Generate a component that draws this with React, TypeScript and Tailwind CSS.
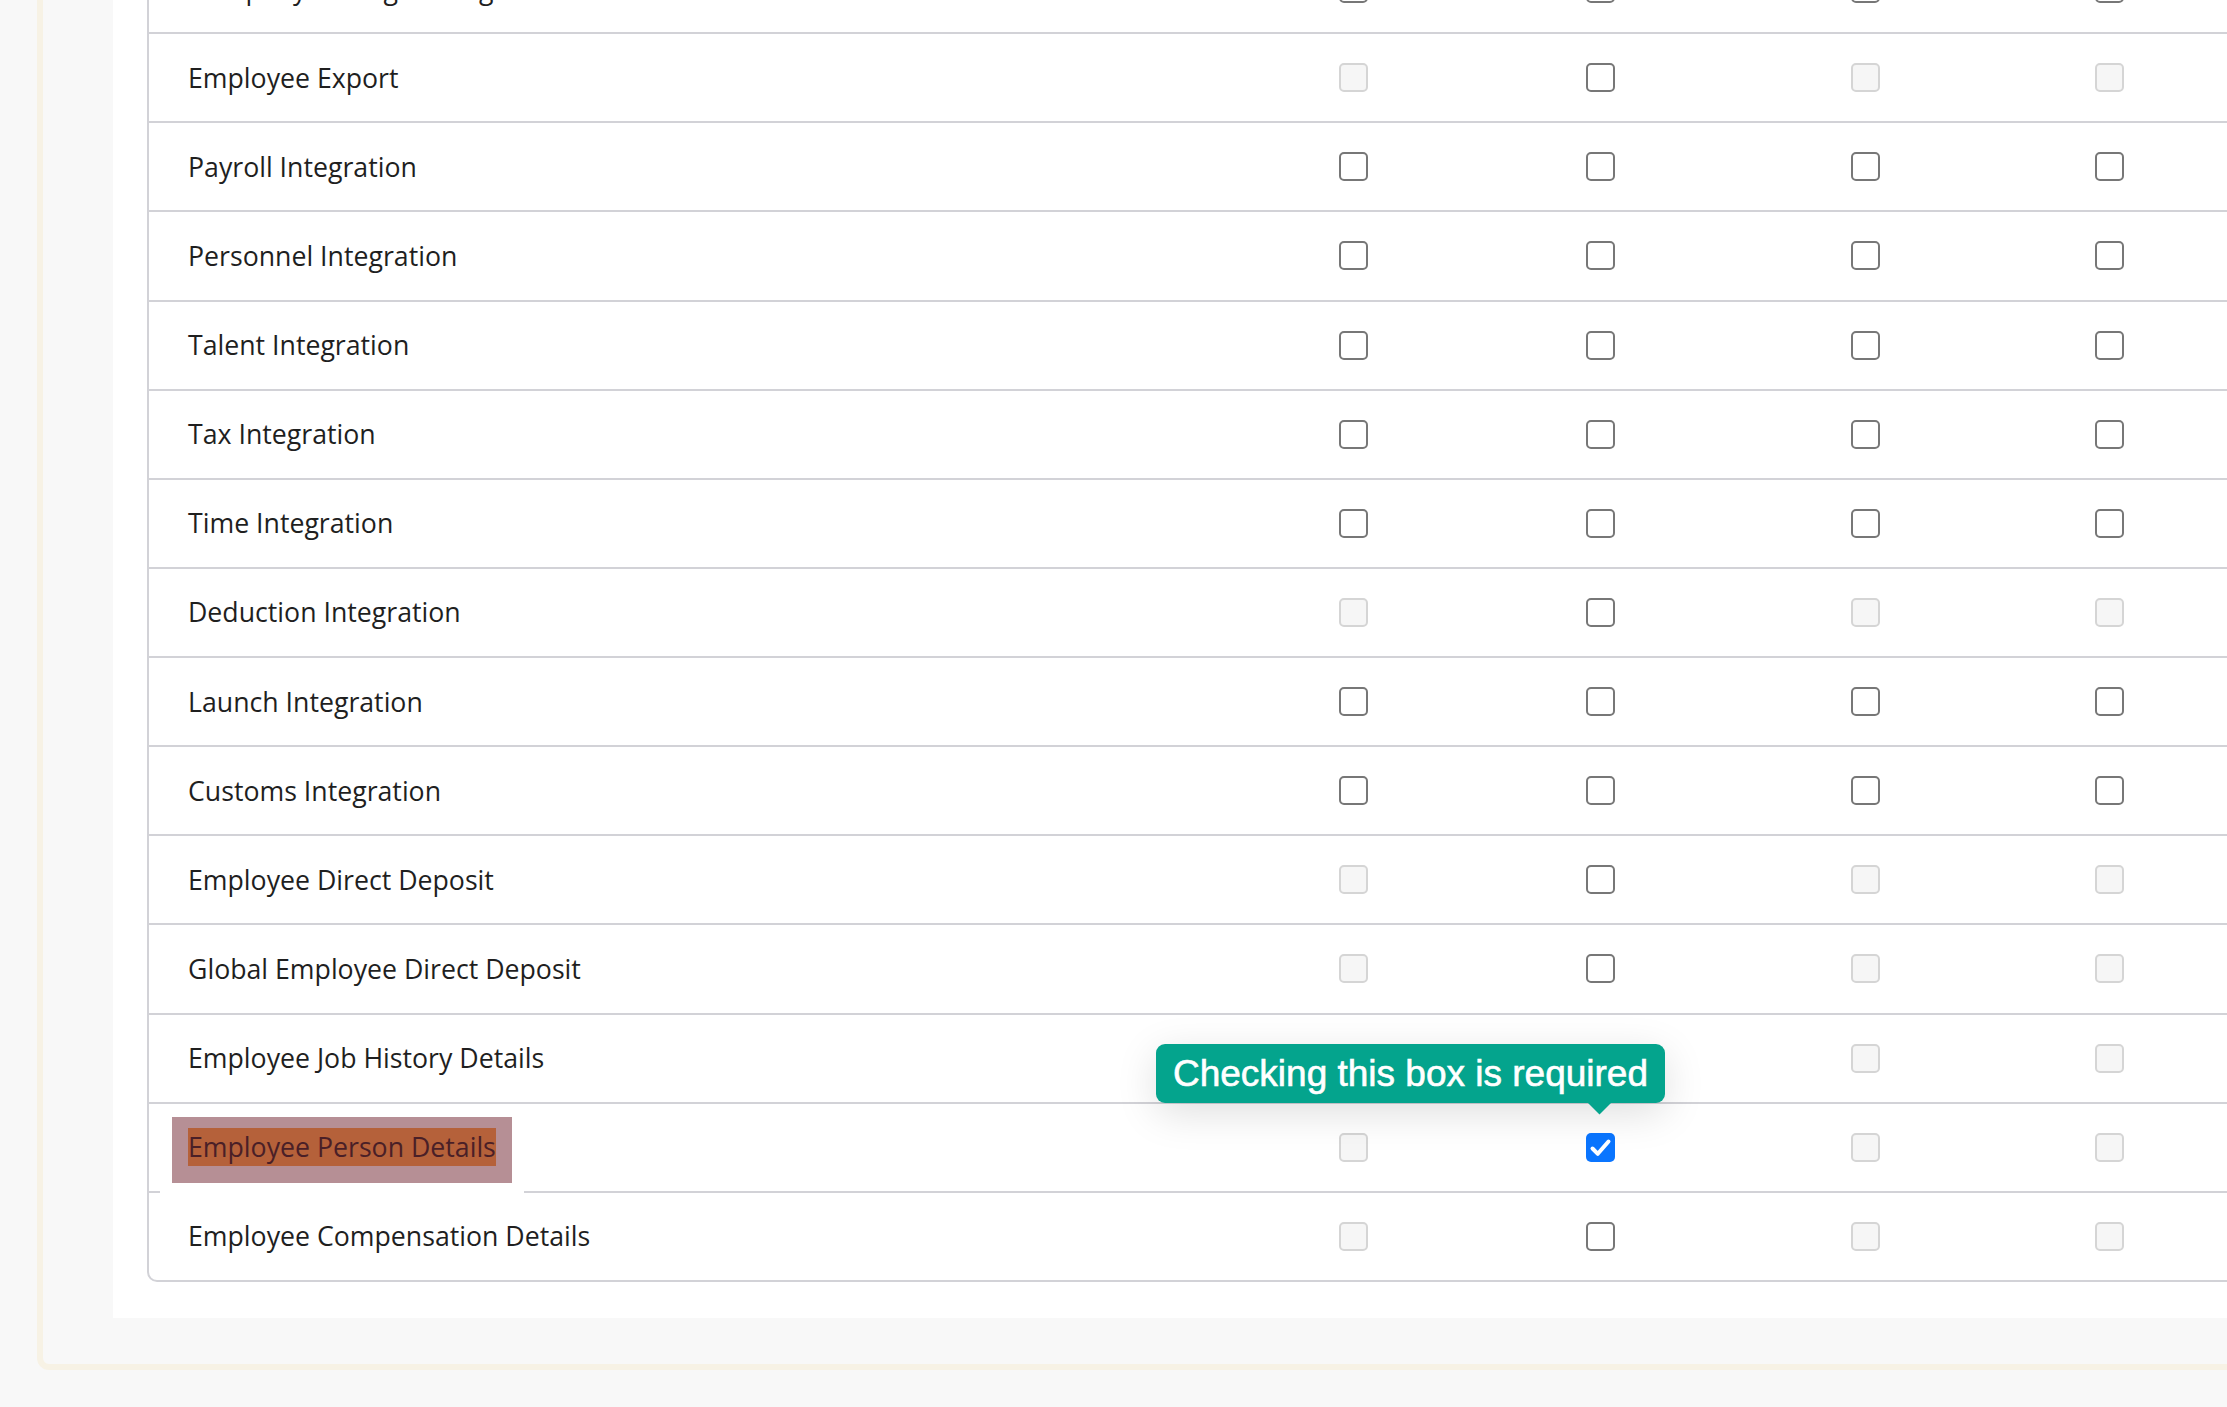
import React from "react";

type Box = "on" | "off" | "checked";

interface PermissionRow {
  label: string;
  boxes: Box[];
  highlight?: boolean;
}

const rows: PermissionRow[] = [
  { label: "Company Manager Integration", boxes: ["on", "on", "on", "on"] },
  { label: "Employee Export", boxes: ["off", "on", "off", "off"] },
  { label: "Payroll Integration", boxes: ["on", "on", "on", "on"] },
  { label: "Personnel Integration", boxes: ["on", "on", "on", "on"] },
  { label: "Talent Integration", boxes: ["on", "on", "on", "on"] },
  { label: "Tax Integration", boxes: ["on", "on", "on", "on"] },
  { label: "Time Integration", boxes: ["on", "on", "on", "on"] },
  { label: "Deduction Integration", boxes: ["off", "on", "off", "off"] },
  { label: "Launch Integration", boxes: ["on", "on", "on", "on"] },
  { label: "Customs Integration", boxes: ["on", "on", "on", "on"] },
  { label: "Employee Direct Deposit", boxes: ["off", "on", "off", "off"] },
  { label: "Global Employee Direct Deposit", boxes: ["off", "on", "off", "off"] },
  { label: "Employee Job History Details", boxes: ["off", "on", "off", "off"] },
  { label: "Employee Person Details", boxes: ["off", "checked", "off", "off"], highlight: true },
  { label: "Employee Compensation Details", boxes: ["off", "on", "off", "off"] },
];

function Checkbox({ state, tooltip }: { state: Box; tooltip?: boolean }) {
  return (
    <div className="relative h-[29px] w-[29px]">
      {state === "checked" && (
        <span className="flex h-full w-full items-center justify-center rounded-[5px] bg-[#0a75ff]">
          <svg width="29" height="29" viewBox="0 0 29 29" fill="none">
            <path d="M6.5 15.5 L11.8 20.8 L22.5 8.5" stroke="#fff" strokeWidth="4" strokeLinecap="round" strokeLinejoin="round" />
          </svg>
        </span>
      )}
      {state === "off" && <span className="block h-full w-full rounded-[5px] border-2 border-[#d5d5d5] bg-[#f6f6f6]" />}
      {state === "on" && <span className="block h-full w-full rounded-[5px] border-2 border-[#777777] bg-white" />}

      {tooltip && (
        <div className="absolute left-[-429.5px] top-[-89px] z-20 flex h-[59px] w-[509px] items-center justify-center rounded-[9px] bg-[#04a48d] shadow-[0_10px_40px_rgba(0,0,0,0.13)]">
          <div className="absolute left-[434.5px] top-[50.5px] h-[17px] w-[17px] rotate-45 bg-[#04a48d]" />
          <span className="relative whitespace-nowrap font-['Liberation_Sans',Arial,sans-serif] text-[37px] leading-none text-white [-webkit-text-stroke:0.6px_#ffffff]">
            Checking this box is required
          </span>
        </div>
      )}
    </div>
  );
}

export default function App() {
  return (
    <div className="h-[1407px] w-full overflow-hidden bg-[#f8f8f8] font-['Open_Sans','Noto_Sans',sans-serif]">
      <div className="-mt-[150px] ml-[37px] w-[2400px] rounded-bl-[12px] border-[6px] border-[#f7f2e5] bg-[#f8f8f8] pb-[46px] pl-[70px] pt-[53px]">
        <div className="bg-white pb-[36px] pl-[34px] pt-[34px]">
          <div className="rounded-[10px] border-2 border-[#d2d2d7] bg-white">
            {rows.map((row, i) => (
              <div
                key={row.label}
                className={`grid grid-cols-[1081px_246px_248px_282px_206px] items-center ${
                  i === rows.length - 1 ? "h-[87.14px]" : "h-[89.14px] border-b-2 border-[#d2d2d7]"
                }`}
              >
                <div className="pl-[39px] text-[26.7px] text-[#1f1f1f]">
                  {row.highlight ? (
                    <span className="relative inline-block">
                      <span className="absolute -bottom-[16px] -left-[16px] -right-[16px] -top-[10px] bg-[#b68f95] shadow-[0_0_0_12px_#ffffff]" />
                      <span className="relative inline-block bg-[#b5613a] leading-[38px] text-[#4a1f27]">{row.label}</span>
                    </span>
                  ) : (
                    <span>{row.label}</span>
                  )}
                </div>
                {row.boxes.map((b, j) => (
                  <div key={j} className="flex justify-center">
                    <Checkbox state={b} tooltip={row.highlight && j === 1} />
                  </div>
                ))}
              </div>
            ))}
          </div>
        </div>
      </div>
    </div>
  );
}
